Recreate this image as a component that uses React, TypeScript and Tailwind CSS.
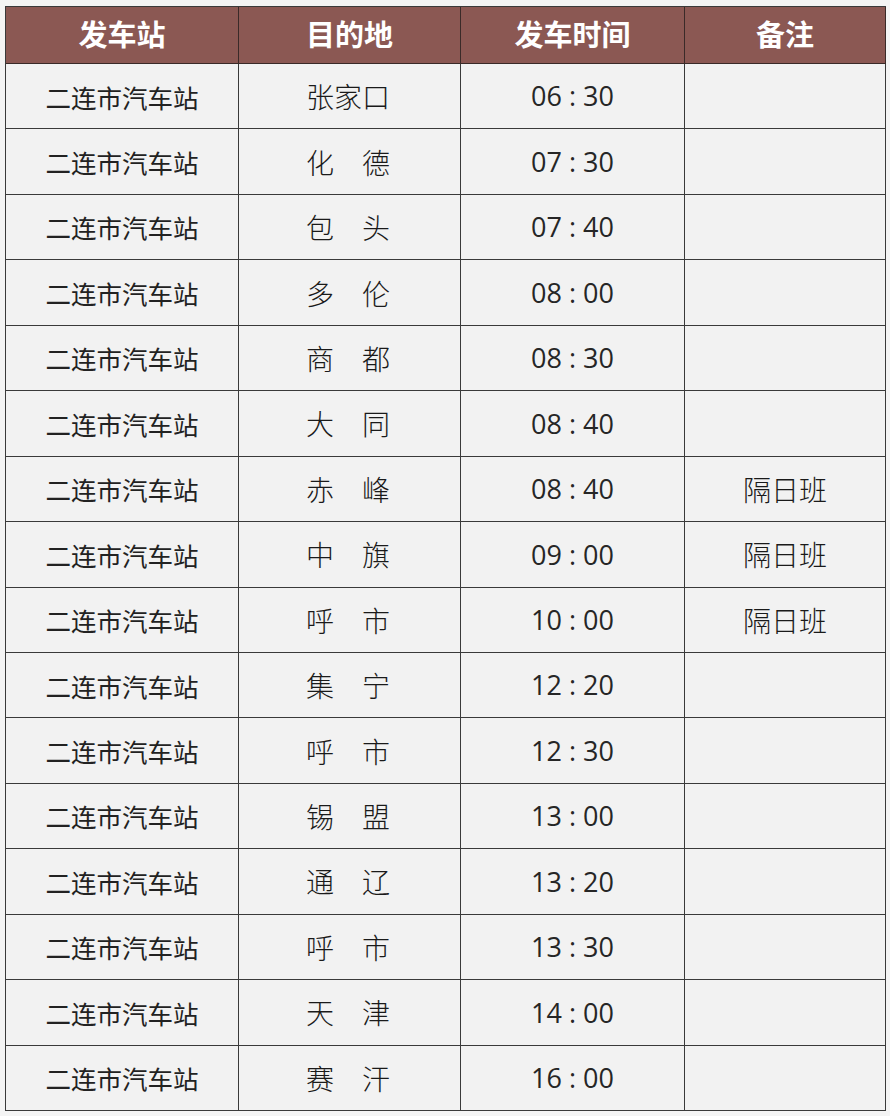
import React from "react";

const rows: [string, string, string][] = [
  ["张家口", "06 : 30", ""],
  ["化　德", "07 : 30", ""],
  ["包　头", "07 : 40", ""],
  ["多　伦", "08 : 00", ""],
  ["商　都", "08 : 30", ""],
  ["大　同", "08 : 40", ""],
  ["赤　峰", "08 : 40", "隔日班"],
  ["中　旗", "09 : 00", "隔日班"],
  ["呼　市", "10 : 00", "隔日班"],
  ["集　宁", "12 : 20", ""],
  ["呼　市", "12 : 30", ""],
  ["锡　盟", "13 : 00", ""],
  ["通　辽", "13 : 20", ""],
  ["呼　市", "13 : 30", ""],
  ["天　津", "14 : 00", ""],
  ["赛　汗", "16 : 00", ""],
];

const cols = "grid grid-cols-[233px_222px_224px_201px]";

export default function App() {
  return (
    <div className="w-[890px] h-[1116px] bg-[#f4f4f4] pt-[6px] pl-[5px] font-['Noto_Sans_CJK_SC',sans-serif]">
      <div className="w-[881px] border-l border-t border-[#3a3a3a]">
        <div className={`${cols} h-[57px] bg-[#8b5853] text-white font-bold text-[29px] border-b border-[#3a2a28]`}>
          {["发车站", "目的地", "发车时间", "备注"].map((h) => (
            <div key={h} className="flex items-center justify-center border-r border-[#3a2a28] leading-none pb-[3px]">
              {h}
            </div>
          ))}
        </div>
        {rows.map(([dest, time, note], i) => (
          <div key={i} className={`${cols} h-[65.44px] bg-[#f2f2f2] text-[#222]`}>
            <div className="flex items-center justify-center border-r border-b border-[#3a3a3a] text-[25.5px] pt-[1px]">
              二连市汽车站
            </div>
            <div className="flex items-center justify-center border-r border-b border-[#3a3a3a] text-[28px] font-light text-[#1a1a1a] pr-[3px]">
              {dest}
            </div>
            <div className="flex items-center justify-center border-r border-b border-[#3a3a3a] text-[27px] font-['Open_Sans',sans-serif] text-[#262626] pt-[1px] whitespace-pre">
              {time}
            </div>
            <div className="flex items-center justify-center border-r border-b border-[#3a3a3a] text-[28px] font-light text-[#1a1a1a]">
              {note}
            </div>
          </div>
        ))}
      </div>
    </div>
  );
}
